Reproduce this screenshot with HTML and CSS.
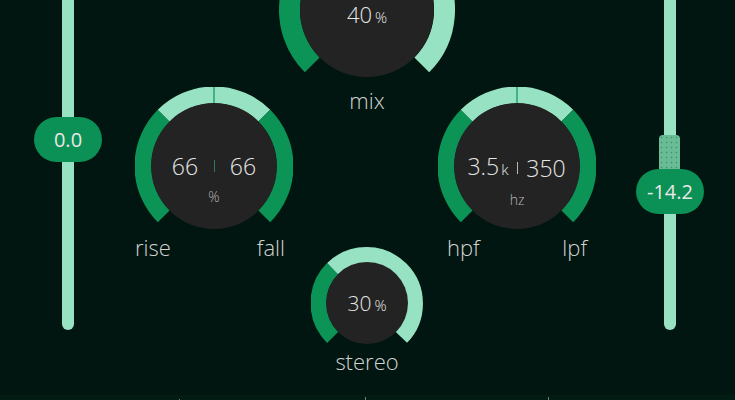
FILE: index.html
```html
<!DOCTYPE html>
<html>
<head>
<meta charset="utf-8">
<link rel="stylesheet" href="styles.css">
</head>
<body>
<div class="app">
  <div class="main">
    <div class="slider slider-left">
      <div class="track"></div>
      <div class="badge badge-left">0.0</div>
    </div>

    <div class="knobs">
      <div class="knob-col col-left">
        <div class="knob knob-dual">
          <svg class="dial" width="158" height="143" viewBox="0 0 158 143">
            <path class="arc-dark" d="M28.8 129.2 A71 71 0 0 1 28.8 28.8"/>
            <path class="arc-light" d="M28.8 28.8 A71 71 0 0 1 129.2 28.8"/>
            <path class="arc-dark" d="M129.2 28.8 A71 71 0 0 1 129.2 129.2"/>
            <line class="tick" x1="79" y1="0" x2="79" y2="17"/>
            <circle class="face" cx="79" cy="79" r="63"/>
          </svg>
          <div class="readout readout-dual">
            <div class="pair">
              <span class="val">66</span>
              <span class="sep sep-green"></span>
              <span class="val">66</span>
            </div>
            <div class="unit">%</div>
          </div>
        </div>
        <div class="labels labels-left"><span>rise</span><span>fall</span></div>
      </div>

      <div class="knob-col col-mid">
        <div class="knob knob-mix">
          <svg class="dial" width="176" height="156" viewBox="0 0 176 156">
            <path class="arc-dark arc-mix" d="M33.2 142.8 A77.5 77.5 0 0 1 52.81 18.95"/>
            <path class="arc-light arc-mix" d="M52.81 18.95 A77.5 77.5 0 0 1 142.8 142.8"/>
            <circle class="face" cx="88" cy="88" r="67"/>
          </svg>
          <div class="readout readout-mix">
            <div class="single"><span class="big">40</span><span class="pct">%</span></div>
          </div>
        </div>
        <div class="label label-mix">mix</div>

        <div class="knob knob-stereo">
          <svg class="dial" width="112" height="98" viewBox="0 0 112 98">
            <path class="arc-dark arc-st" d="M21.71 90.29 A48.5 48.5 0 0 1 21.71 21.71"/>
            <path class="arc-light arc-st" d="M21.71 21.71 A48.5 48.5 0 0 1 90.29 90.29"/>
            <circle class="face" cx="56" cy="56" r="41"/>
          </svg>
          <div class="readout readout-stereo">
            <div class="single"><span class="mid">30</span><span class="pct">%</span></div>
          </div>
        </div>
        <div class="label label-stereo">stereo</div>
      </div>

      <div class="knob-col col-right">
        <div class="knob knob-dual">
          <svg class="dial" width="158" height="143" viewBox="0 0 158 143">
            <path class="arc-dark" d="M28.8 129.2 A71 71 0 0 1 28.8 28.8"/>
            <path class="arc-light" d="M28.8 28.8 A71 71 0 0 1 129.2 28.8"/>
            <path class="arc-dark" d="M129.2 28.8 A71 71 0 0 1 129.2 129.2"/>
            <line class="tick" x1="79" y1="0" x2="79" y2="17"/>
            <circle class="face" cx="79" cy="79" r="63"/>
          </svg>
          <div class="readout readout-dual">
            <div class="pair">
              <span class="val">3.5<small class="k">k</small></span>
              <span class="sep sep-grey"></span>
              <span class="val">350</span>
            </div>
            <div class="unit">hz</div>
          </div>
        </div>
        <div class="labels labels-right"><span>hpf</span><span>lpf</span></div>
      </div>
    </div>

    <div class="slider slider-right">
      <div class="track"></div>
      <div class="handle"></div>
      <div class="badge badge-right">-14.2</div>
    </div>
  </div>
  <div class="footer">
    <span class="fmark fm1"></span>
    <span class="fmark fm2"></span>
    <span class="fmark fm3"></span>
  </div>
</div>
</body>
</html>
```

FILE: styles.css
```css
* { box-sizing: border-box; margin: 0; padding: 0; }

html, body {
  width: 735px;
  height: 400px;
  overflow: hidden;
  background: #011610;
}

body {
  font-family: "Open Sans", "Liberation Sans", sans-serif;
  font-weight: 300;
  color: #e4e4e4;
}

.app {
  display: flex;
  flex-direction: column;
  height: 400px;
}

.main {
  display: grid;
  grid-template-columns: 135px 464px 136px;
  height: 395px;
  overflow: hidden;
}

/* sliders */
.slider {
  position: relative;
  display: flex;
  justify-content: center;
  align-items: flex-start;
}

.slider-right { padding-left: 5px; }

.track {
  width: 12px;
  height: 330px;
  background: #98e2c4;
  border-radius: 0 0 6px 6px;
}

.badge {
  position: absolute;
  width: 68px;
  height: 45px;
  border-radius: 23px;
  background: #0b9055;
  color: #e8e8e8;
  font-size: 20px;
  font-weight: 400;
  display: flex;
  align-items: center;
  justify-content: center;
  line-height: 1;
}

.badge-left { left: 34px; top: 117px; }
.badge-right { left: 37px; top: 169px; }

.handle {
  position: absolute;
  left: 60px;
  top: 135px;
  width: 21px;
  height: 40px;
  border-radius: 4px 4px 0 0;
  background-color: #69bd96;
  background-image: radial-gradient(circle, rgba(20, 90, 60, 0.45) 0.7px, transparent 1.1px);
  background-size: 5px 5px;
}

/* knobs */
.knobs {
  display: grid;
  grid-template-columns: 158px 145px 161px;
  align-items: start;
}

.knob-col {
  display: flex;
  flex-direction: column;
}

.col-left, .col-right {
  padding-top: 87px;
  width: 158px;
}

.col-mid {
  padding-left: 3px;
  align-items: center;
}

.knob {
  position: relative;
  display: flex;
  justify-content: center;
}

.dial { display: block; flex: none; }

.arc-dark, .arc-light { fill: none; stroke-width: 17; }
.arc-dark { stroke: #0b9456; }
.arc-light { stroke: #98e2c4; }
.arc-mix { stroke-width: 21; }
.arc-st { stroke-width: 16; }
.tick { stroke: #0b9456; stroke-width: 1.2; }
.face { fill: #232323; }

.readout {
  position: absolute;
  left: 0;
  right: 0;
  top: 0;
  display: flex;
  flex-direction: column;
  align-items: center;
  pointer-events: none;
}

.readout-dual { padding-top: 65px; }
.readout-mix { padding-top: 79px; }
.readout-stereo { padding-top: 43px; }

.knob-mix { margin-top: -78px; }
.knob-stereo { margin-top: 135px; }

.pair {
  display: grid;
  grid-template-columns: 57px 1px 57px;
  align-items: center;
  font-size: 23px;
  line-height: 28px;
  color: #e6e6e6;
}

.val {
  text-align: center;
  white-space: nowrap;
}

.k {
  font-size: 15px;
  margin-left: 2px;
}

.sep {
  width: 1px;
  height: 12px;
  justify-self: center;
}
.sep-green { background: #2f7a58; }
.sep-grey { background: #b9b9b9; }

.unit {
  margin-top: 9px;
  font-size: 14px;
  line-height: 16px;
  color: #b5b5b5;
}

.single {
  color: #e6e6e6;
  white-space: nowrap;
}

.big { font-size: 22px; line-height: 26px; }
.mid { font-size: 21px; line-height: 26px; }
.pct { font-size: 15px; margin-left: 3px; }

.label, .labels {
  font-size: 22px;
  line-height: 24px;
  color: #d2d2d2;
}

.label-mix { margin-top: 10px; }
.label-stereo { margin-top: 4px; }

.labels {
  display: flex;
  justify-content: space-between;
  margin-top: 5px;
}

.labels-left { padding-right: 8px; }
.labels-right { padding-left: 9px; padding-right: 9px; }

/* footer strip */
.footer {
  height: 5px;
  background: #031c13;
  display: flex;
  align-items: flex-end;
}

.fmark {
  width: 1px;
  background: #6f7f78;
}
.fm1 { margin-left: 179px; height: 1px; }
.fm2 { margin-left: 185px; height: 3px; }
.fm3 { margin-left: 182px; height: 3px; }
```
